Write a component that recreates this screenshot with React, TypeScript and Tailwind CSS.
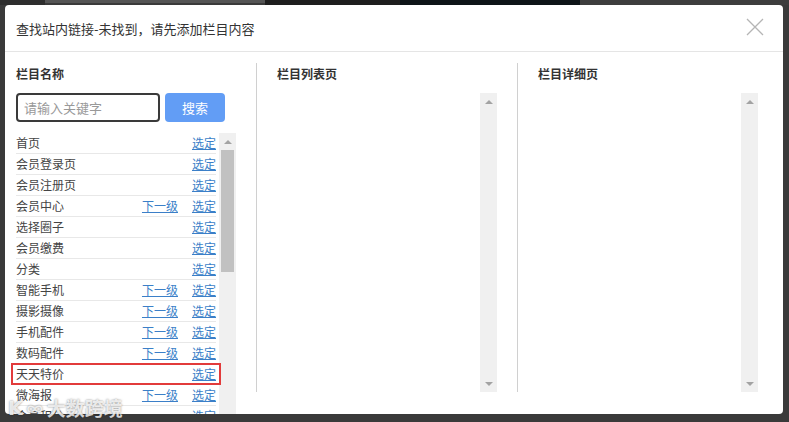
import React from 'react'

type Row = { name: string; sub?: boolean; mark?: boolean }

const rows: Row[] = [
  { name: '首页' },
  { name: '会员登录页' },
  { name: '会员注册页' },
  { name: '会员中心', sub: true },
  { name: '选择圈子' },
  { name: '会员缴费' },
  { name: '分类' },
  { name: '智能手机', sub: true },
  { name: '摄影摄像', sub: true },
  { name: '手机配件', sub: true },
  { name: '数码配件', sub: true },
  { name: '天天特价', mark: true },
  { name: '微海报', sub: true },
  { name: '会员积分' },
]

function ScrollBar({ thumb, className }: { thumb?: boolean; className?: string }) {
  return (
    <div className={`w-[17px] bg-[#f0f0f0] flex flex-col items-center shrink-0 ${className ?? ''}`}>
      <div className="h-[17px] flex items-center justify-center shrink-0">
        <div className="w-0 h-0 border-l-[4px] border-r-[4px] border-b-[4px] border-l-transparent border-r-transparent border-b-[#a3a3a3]" />
      </div>
      {thumb && <div className="w-[13px] h-[122px] bg-[#c1c1c1] shrink-0" />}
      <div className="flex-1" />
      <div className="h-[17px] flex items-center justify-center shrink-0">
        <div className="w-0 h-0 border-l-[4px] border-r-[4px] border-t-[4px] border-l-transparent border-r-transparent border-t-[#a3a3a3]" />
      </div>
    </div>
  )
}

function ColHead({ children }: { children: React.ReactNode }) {
  return <div className="h-[18px] shrink-0 leading-[18px] text-[12px] font-bold text-[#333]">{children}</div>
}

export default function App() {
  return (
    <div className="w-[789px] h-[422px] bg-[#3a3a3a] relative overflow-hidden font-['Noto_Sans_CJK_SC','Noto_Sans',sans-serif]">
      <div className="h-[5px] flex">
        <div className="w-[45px] bg-[#2e2e2e]" />
        <div className="w-[220px] h-[3px] bg-[#555]" />
        <div className="w-[135px] bg-[#1e1e1e]" />
        <div className="w-[180px] bg-[#0e1418]" />
        <div className="flex-1 bg-[#3d3d3d]" />
      </div>
      <div className="ml-[5px] w-[778px] h-[409px] bg-white rounded-[4px] overflow-hidden flex flex-col">
        <div className="h-[47px] shrink-0 flex items-center justify-between pl-[11px] pr-[19px] border-b border-[#e5e5e5]">
          <span className="text-[13px] text-[#333] mt-[2px]">查找站内链接-未找到，请先添加栏目内容</span>
          <svg width="18" height="18" viewBox="0 0 18 18" className="mb-[2px]">
            <path d="M1 1 L17 17 M17 1 L1 17" stroke="#b5b5b5" strokeWidth="1.3" fill="none" />
          </svg>
        </div>
        <div className="flex flex-1 min-h-0">
          {/* column 1 */}
          <div className="w-[220px] ml-[11px] pt-[13px] flex flex-col shrink-0">
            <ColHead>栏目名称</ColHead>
            <div className="mt-[10px] flex gap-[5px] h-[29px] shrink-0">
              <div className="w-[144px] border-2 border-[#3a3a3a] rounded-[4px] flex items-center pl-[6px] text-[13px] text-[#999]">
                请输入关键字
              </div>
              <div className="w-[60px] bg-[#629df5] rounded-[4px] flex items-center justify-center text-[13px] text-white">
                搜索
              </div>
            </div>
            <div className="mt-[11px] flex h-[300px] shrink-0">
              <div className="w-[200px] flex flex-col">
                {rows.map(r => (
                  <div key={r.name} className="relative h-[21px] shrink-0 flex items-center border-b border-[#e8e8e8] text-[12px]">
                    <span className="flex-1 text-[#444]">{r.name}</span>
                    {r.sub && <span className="text-[#3b7fc8] underline mr-[14px]">下一级</span>}
                    <span className="text-[#3b7fc8] underline">选定</span>
                    {r.mark && <div className="absolute -left-[5px] -right-[5px] -top-[1px] h-[22px] border-2 border-[#e23b3b]" />}
                  </div>
                ))}
              </div>
              <ScrollBar thumb className="ml-[3px]" />
            </div>
          </div>
          <div className="w-px bg-[#d0d0d0] mt-[11px] h-[329px] ml-[20px] shrink-0" />
          {/* column 2 */}
          <div className="w-[260px] pl-[20px] pt-[13px] flex flex-col shrink-0">
            <ColHead>栏目列表页</ColHead>
            <div className="mt-[10px] h-[299px] w-[220px] flex justify-end shrink-0">
              <ScrollBar />
            </div>
          </div>
          <div className="w-px bg-[#d0d0d0] mt-[11px] h-[329px] shrink-0" />
          {/* column 3 */}
          <div className="w-[260px] pl-[20px] pt-[13px] flex flex-col shrink-0">
            <ColHead>栏目详细页</ColHead>
            <div className="mt-[10px] h-[299px] w-[220px] flex justify-end shrink-0">
              <ScrollBar />
            </div>
          </div>
        </div>
      </div>
      <div className="absolute left-[8px] top-[394px] flex items-center gap-[4px] text-[19px] font-bold text-white/80 [text-shadow:0_0_2px_rgba(0,0,0,0.5)]">
        <span className="font-['DejaVu_Sans',sans-serif]">K</span>
        <span className="text-[16px]">∞</span>
        <span>大数跨境</span>
      </div>
    </div>
  )
}
